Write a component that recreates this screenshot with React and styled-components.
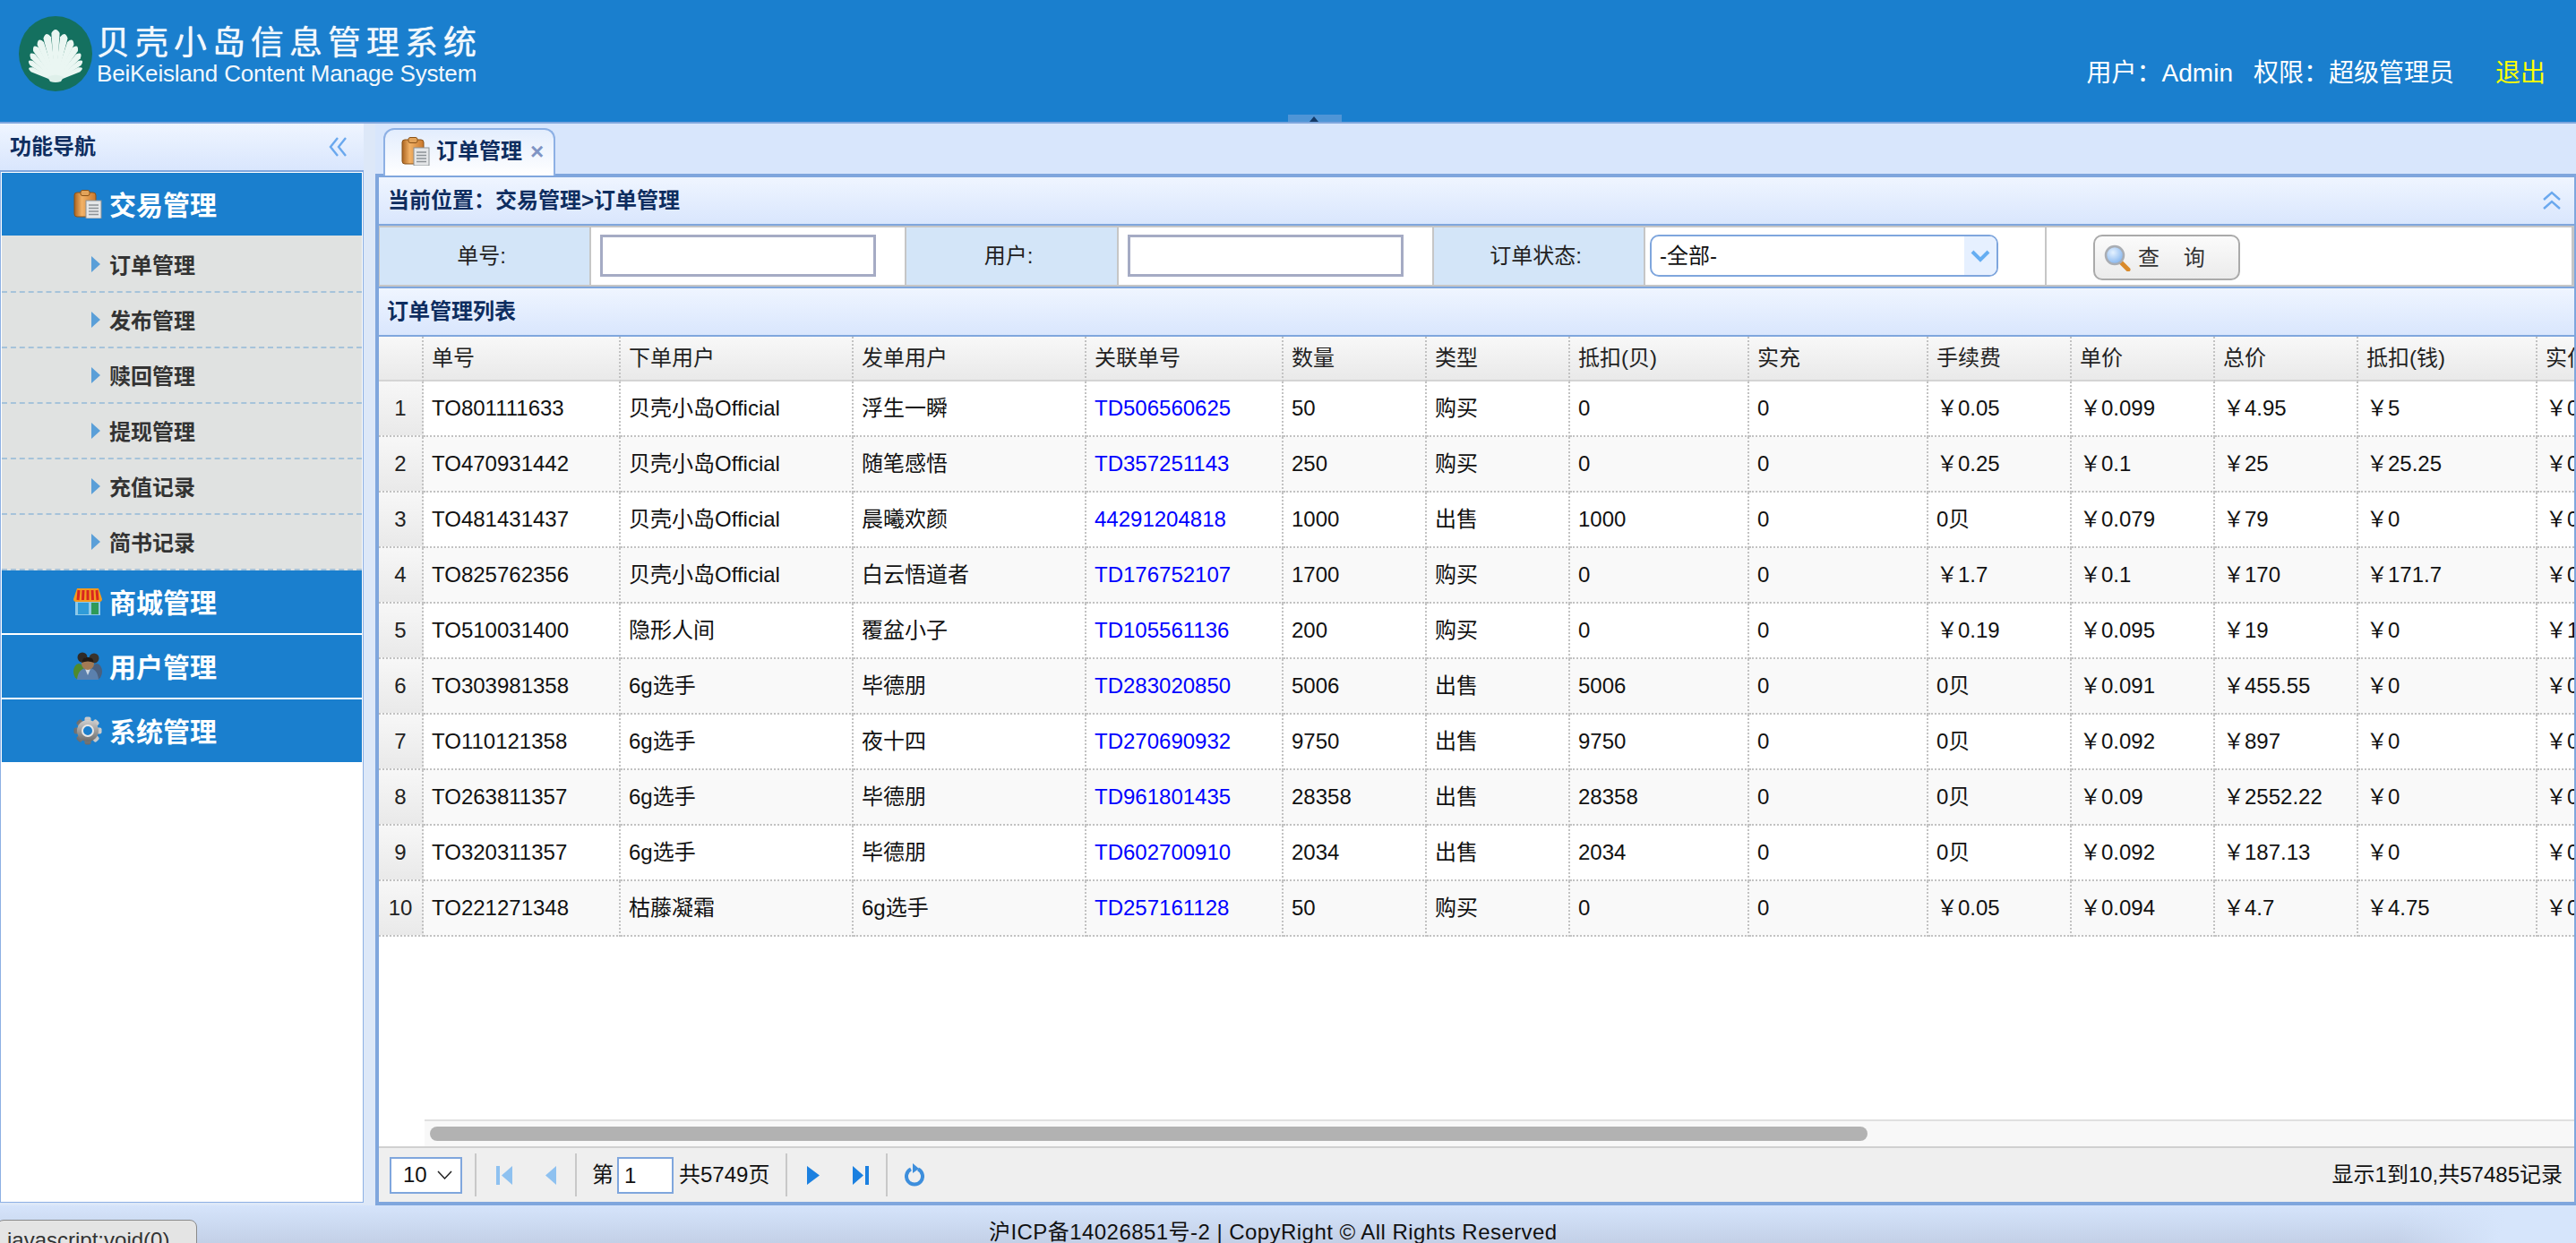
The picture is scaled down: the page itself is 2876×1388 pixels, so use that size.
import React from 'react';
import styled, { createGlobalStyle } from 'styled-components';

const FONT = '"Liberation Sans", "Noto Sans CJK SC", sans-serif';
const COL_WIDTHS = [50, 220, 260, 260, 220, 160, 160, 200, 200, 160, 160, 160, 200, 200];
const HEADS = ['', '单号', '下单用户', '发单用户', '关联单号', '数量', '类型', '抵扣(贝)', '实充', '手续费', '单价', '总价', '抵扣(钱)', '实付'];
const ROWS = [
  ['TO801111633', '贝壳小岛Official', '浮生一瞬', 'TD506560625', '50', '购买', '0', '0', '￥0.05', '￥0.099', '￥4.95', '￥5', '￥0'],
  ['TO470931442', '贝壳小岛Official', '随笔感悟', 'TD357251143', '250', '购买', '0', '0', '￥0.25', '￥0.1', '￥25', '￥25.25', '￥0'],
  ['TO481431437', '贝壳小岛Official', '晨曦欢颜', '44291204818', '1000', '出售', '1000', '0', '0贝', '￥0.079', '￥79', '￥0', '￥0'],
  ['TO825762356', '贝壳小岛Official', '白云悟道者', 'TD176752107', '1700', '购买', '0', '0', '￥1.7', '￥0.1', '￥170', '￥171.7', '￥0'],
  ['TO510031400', '隐形人间', '覆盆小子', 'TD105561136', '200', '购买', '0', '0', '￥0.19', '￥0.095', '￥19', '￥0', '￥1'],
  ['TO303981358', '6g选手', '毕德朋', 'TD283020850', '5006', '出售', '5006', '0', '0贝', '￥0.091', '￥455.55', '￥0', '￥0'],
  ['TO110121358', '6g选手', '夜十四', 'TD270690932', '9750', '出售', '9750', '0', '0贝', '￥0.092', '￥897', '￥0', '￥0'],
  ['TO263811357', '6g选手', '毕德朋', 'TD961801435', '28358', '出售', '28358', '0', '0贝', '￥0.09', '￥2552.22', '￥0', '￥0'],
  ['TO320311357', '6g选手', '毕德朋', 'TD602700910', '2034', '出售', '2034', '0', '0贝', '￥0.092', '￥187.13', '￥0', '￥0'],
  ['TO221271348', '枯藤凝霜', '6g选手', 'TD257161128', '50', '购买', '0', '0', '￥0.05', '￥0.094', '￥4.7', '￥4.75', '￥0'],
];
const SUB_MENU = ['订单管理', '发布管理', '赎回管理', '提现管理', '充值记录', '简书记录'];

const GlobalStyle = createGlobalStyle`
  html, body {
    margin: 0;
    padding: 0;
  }
  body {
    font-family: ${FONT};
    font-size: 24px;
    line-height: 30px;
    color: #111;
  }
  * {
    box-sizing: border-box;
  }
`;

const ShellLogo = () => {
  const ribs = [-65, -54, -43, -32, -22, -11, 0, 11, 22, 32, 43, 54, 65];
  return (
    <svg width="82" height="84" viewBox="0 0 82 84">
      <ellipse cx="41" cy="42" rx="41" ry="42" fill="#14705f" />
      {ribs.map((a) => {
        const len = 58 - Math.abs(a) * 0.37;
        const w = len * 0.08;
        return (
          <path
            key={a}
            transform={`rotate(${a} 41 72)`}
            d={`M40 72 L${41 - w} ${72 - len + 5} Q41 ${72 - len - 3} ${41 + w} ${72 - len + 5} L42 72 Z`}
            fill="#eaf6f2"
          />
        );
      })}
      <path d="M32 68 Q41 63 50 68 L47 73 Q41 75 35 73 Z" fill="#dff0ea" />
    </svg>
  );
};

const ClipboardIcon = ({ id }) => (
  <svg width="32" height="32" viewBox="0 0 32 32">
    <defs>
      <linearGradient id={id} x1="0" y1="0" x2="1" y2="0">
        <stop offset="0" stopColor="#a9631f" />
        <stop offset="0.35" stopColor="#f2b267" />
        <stop offset="1" stopColor="#c9782c" />
      </linearGradient>
    </defs>
    <rect x="1" y="3" width="24" height="27" rx="3" fill={`url(#${id})`} stroke="#8a5218" />
    <rect x="8" y="0.5" width="10" height="6" rx="2" fill="#e2a35a" stroke="#8a5218" />
    <rect x="14" y="12" width="17" height="20" fill="#e4e6e8" stroke="#8c9296" />
    <path d="M17 17H28M17 20.5H28M17 24H28M17 27.500H28" stroke="#8c9296" strokeWidth="1.6" />
  </svg>
);

const StoreIcon = () => (
  <svg width="32" height="32" viewBox="0 0 32 32">
    <rect x="2" y="13" width="28" height="18" fill="#8fc9e8" />
    <rect x="5" y="17" width="12" height="13" fill="#2f9bd8" />
    <rect x="20" y="17" width="8" height="13" fill="#2e9a58" />
    <path d="M4 1H28L32 13Q32 16 29 16H3Q0 16 0 13Z" fill="#f29a1f" />
    <path d="M6 3L5 14M11 3L10.500 14M16 3V14M21 3L21.500 14M26 3L27 14" stroke="#d8261f" strokeWidth="3" />
  </svg>
);

const UsersIcon = () => (
  <svg width="32" height="32" viewBox="0 0 32 32">
    <circle cx="10" cy="6" r="5.500" fill="#2f2a26" />
    <circle cx="23" cy="7" r="5.500" fill="#3a332c" />
    <ellipse cx="6" cy="22" rx="6" ry="9" fill="#4f8a2c" />
    <ellipse cx="26" cy="22" rx="6" ry="9" fill="#4a5f7d" />
    <path d="M4 31Q5 18 16 18Q27 18 28 31Z" fill="#5b80ad" />
    <path d="M13 19L16 26L19 19Z" fill="#cfd9e4" />
    <circle cx="16" cy="13" r="7" fill="#a37a54" />
    <path d="M9 12Q10 5 16 6Q22 5 23 12Q16 9 9 12Z" fill="#1f1a16" />
  </svg>
);

const GearIcon = ({ id }) => (
  <svg width="32" height="32" viewBox="0 0 32 32">
    <defs>
      <linearGradient id={id} x1="0" y1="0" x2="0" y2="1">
        <stop offset="0" stopColor="#cfcfcf" />
        <stop offset="1" stopColor="#6b6b6b" />
      </linearGradient>
    </defs>
    <g fill={`url(#${id})`}>
      {[0, 45, 90, 135].map((a) => (
        <rect key={a} x="12.500" y="0.500" width="7" height="31" rx="2" transform={`rotate(${a} 16 16)`} />
      ))}
      <circle cx="16" cy="16" r="12" />
    </g>
    <circle cx="16" cy="16" r="6" fill="#1a7fce" stroke="#e8e8e8" strokeWidth="2" />
  </svg>
);

const DoubleChevron = ({ up }) => (
  <svg width="22" height="22" viewBox="0 0 22 22" fill="none" stroke="#6aa8ee" strokeWidth="2.400">
    {up ? (
      <path d="M2 10L11 2L20 10M2 20L11 12L20 20" />
    ) : (
      <path d="M11 1L3 11L11 21M20 1L12 11L20 21" />
    )}
  </svg>
);

const SearchIcon = () => (
  <svg width="30" height="30" viewBox="0 0 30 30">
    <defs>
      <radialGradient id="glass" cx="0.4" cy="0.35" r="0.7">
        <stop offset="0" stopColor="#e4f1ff" />
        <stop offset="1" stopColor="#7fb2ee" />
      </radialGradient>
    </defs>
    <path d="M19 20L27 28" stroke="#d98a2b" strokeWidth="5" strokeLinecap="round" />
    <circle cx="12" cy="12" r="10" fill="url(#glass)" stroke="#a9adb3" strokeWidth="2.500" />
  </svg>
);

const PageIcon = ({ kind, on }) => {
  const shapes = {
    first: <path d="M0 0H4V21H0ZM18 0V21L6 10.500Z" />,
    prev: <path d="M18 0V21L6 10.500Z" />,
    next: <path d="M0 0V21L14 10.500Z" />,
    last: <path d="M0 0L12 10.500L0 21ZM14 0H18V21H14Z" />,
  };
  return (
    <svg width="18" height="21" viewBox="0 0 18 21" fill={on ? '#1b80e0' : '#8ec1f0'}>
      {shapes[kind]}
    </svg>
  );
};

const RefreshIcon = () => (
  <svg width="22" height="26" viewBox="0 0 22 26" fill="none">
    <path d="M7 6.500A9 9 0 1 0 15 6.500" stroke="#3d8edc" strokeWidth="4" />
    <path d="M9 0L16 6L9 11Z" fill="#3d8edc" />
  </svg>
);

const App = () => {
  return (
    <Page>
      <GlobalStyle />
      <Header>
        <ShellLogo />
        <LogoText>
          <LogoTitle>贝壳小岛信息管理系统</LogoTitle>
          <LogoSub>BeiKeisland Content Manage System</LogoSub>
        </LogoText>
        <UserBar>
          <span>用户：Admin</span>
          <UserRole>权限：超级管理员</UserRole>
          <Logout>退出</Logout>
        </UserBar>
        <CollapseHandle />
      </Header>

      <Body>
        <Side>
          <SideTitle>
            功能导航
            <DoubleChevron />
          </SideTitle>
          <SideNav>
            <NavHead>
              <ClipboardIcon id="clipNav" />
              <NavLabel>交易管理</NavLabel>
            </NavHead>
            <SubMenu>
              {SUB_MENU.map((item) => (
                <SubItem key={item}>
                  <SubArrow />
                  <NavLabel>{item}</NavLabel>
                </SubItem>
              ))}
            </SubMenu>
            <NavHead>
              <StoreIcon />
              <NavLabel>商城管理</NavLabel>
            </NavHead>
            <NavGap />
            <NavHead>
              <UsersIcon />
              <NavLabel>用户管理</NavLabel>
            </NavHead>
            <NavGap />
            <NavHead>
              <GearIcon id="gearNav" />
              <NavLabel>系统管理</NavLabel>
            </NavHead>
          </SideNav>
        </Side>

        <Splitter />

        <Main>
          <TabStrip>
            <Tab>
              <ClipboardIcon id="clipTab" />
              <TabLabel>订单管理</TabLabel>
              <TabClose>×</TabClose>
            </Tab>
          </TabStrip>

          <Panel>
            <PanelHead>
              当前位置：交易管理&gt;订单管理
              <DoubleChevron up />
            </PanelHead>

            <SearchRow>
              <SearchLabel $w={236}>单号:&nbsp;</SearchLabel>
              <SearchCell $w={352}>
                <SearchInput />
              </SearchCell>
              <SearchLabel $w={237}>用户:&nbsp;</SearchLabel>
              <SearchCell $w={352}>
                <SearchInput />
              </SearchCell>
              <SearchLabel $w={236}>订单状态:&nbsp;</SearchLabel>
              <SearchCell $w={448}>
                <StatusSelect>
                  -全部-
                  <SelectArrow>
                    <svg width="22" height="14" viewBox="0 0 22 14" fill="none" stroke="#66aef2" strokeWidth="4">
                      <path d="M2 2L11 11L20 2" />
                    </svg>
                  </SelectArrow>
                </StatusSelect>
              </SearchCell>
              <ButtonCell>
                <QueryButton>
                  <SearchIcon />
                  查&nbsp;&nbsp;&nbsp;&nbsp;询
                </QueryButton>
              </ButtonCell>
            </SearchRow>

            <ListTitle>订单管理列表</ListTitle>

            <GridArea>
              <Grid>
                <colgroup>
                  {COL_WIDTHS.map((w, i) => (
                    <col key={i} width={w} />
                  ))}
                </colgroup>
                <thead>
                  <tr>
                    {HEADS.map((h, i) => (
                      <HeadCell key={i}>{h}</HeadCell>
                    ))}
                  </tr>
                </thead>
                <tbody>
                  {ROWS.map((row, r) => (
                    <tr key={row[0]}>
                      <NumCell>{r + 1}</NumCell>
                      {row.map((v, c) => (
                        <DataCell key={c} $odd={r % 2 === 1} $link={c === 3}>
                          {v}
                        </DataCell>
                      ))}
                    </tr>
                  ))}
                </tbody>
              </Grid>
            </GridArea>

            <ScrollRow>
              <ScrollTrack>
                <ScrollThumb />
              </ScrollTrack>
            </ScrollRow>

            <Pager>
              <SizeSelect>
                10
                <svg width="17" height="10" viewBox="0 0 17 10" fill="none" stroke="#222" strokeWidth="1.500">
                  <path d="M1 1L8.500 9L16 1" />
                </svg>
              </SizeSelect>
              <PagerSep />
              <PagerBtn $w={40}>
                <PageIcon kind="first" />
              </PagerBtn>
              <PagerBtn $w={56} $pr={7}>
                <PageIcon kind="prev" />
              </PagerBtn>
              <PagerSep />
              <PagerText>第</PagerText>
              <PageInput>1</PageInput>
              <PagerTotal>共5749页</PagerTotal>
              <PagerSep />
              <PagerBtn $w={40}>
                <PageIcon kind="next" on />
              </PagerBtn>
              <PagerBtn $w={56} $pr={5}>
                <PageIcon kind="last" on />
              </PagerBtn>
              <PagerSep />
              <PagerBtn $w={41}>
                <RefreshIcon />
              </PagerBtn>
              <PagerInfo>显示1到10,共57485记录</PagerInfo>
            </Pager>
          </Panel>
        </Main>
      </Body>

      <Footer>
        沪ICP备14026851号-2 | CopyRight © All Rights Reserved
        <FooterDots>...</FooterDots>
        <StatusTip>javascript:void(0)</StatusTip>
      </Footer>
    </Page>
  );
};

export default App;

const Page = styled.div`
  width: 2876px;
  height: 1388px;
  display: flex;
  flex-direction: column;
  overflow: hidden;
  background: #dde8f8;
`;

const Header = styled.header`
  position: relative;
  height: 138px;
  flex: none;
  display: flex;
  align-items: flex-start;
  padding: 18px 34px 0 21px;
  background: #1a7fce;
  border-bottom: 2px solid #7fa6dd;
`;

const LogoText = styled.div`
  margin-left: 5px;
  color: #f2f8fc;
`;

const LogoTitle = styled.div`
  margin-top: 10px;
  font-size: 37px;
  line-height: 42px;
  letter-spacing: 6px;
  text-shadow: 0 0 1px #fff;
`;

const LogoSub = styled.div`
  font-size: 26px;
  line-height: 24px;
  letter-spacing: -0.200px;
`;

const UserBar = styled.div`
  margin-left: auto;
  margin-top: 46px;
  font-size: 28px;
  line-height: 36px;
  color: #fff;
`;

const UserRole = styled.span`
  margin-left: 23px;
`;

const Logout = styled.span`
  margin-left: 46px;
  color: #ffff00;
`;

const CollapseHandle = styled.div`
  position: absolute;
  left: 1438px;
  bottom: 0;
  width: 60px;
  height: 8px;
  background: #4f95d6;
  &::after {
    content: '';
    position: absolute;
    left: 24px;
    top: 2px;
    border: 5px solid transparent;
    border-top: 0;
    border-bottom: 6px solid #123a68;
  }
`;

const Body = styled.div`
  flex: none;
  height: 1208px;
  display: flex;
`;

const Side = styled.aside`
  width: 406px;
  flex: none;
  height: 1205px;
  display: flex;
  flex-direction: column;
`;

const SideTitle = styled.div`
  height: 54px;
  flex: none;
  display: flex;
  align-items: center;
  justify-content: space-between;
  padding: 0 18px 1px 11px;
  font-size: 24px;
  font-weight: 700;
  color: #0e2d5f;
  background: linear-gradient(#eff5ff, #d9e6fd);
  border-bottom: 2px solid #7fa6dd;
`;

const SideNav = styled.nav`
  flex: 1;
  padding: 1px;
  background: #fff;
  border: 1px solid #8db0e4;
  border-top: 0;
  display: flex;
  flex-direction: column;
`;

const NavHead = styled.div`
  height: 70px;
  flex: none;
  display: flex;
  align-items: center;
  gap: 8px;
  padding-left: 80px;
  font-size: 30px;
  font-weight: 700;
  color: #fff;
  background: #1a7fce;
`;

const NavLabel = styled.span`
  padding-top: 3px;
`;

const NavGap = styled.div`
  height: 2px;
  flex: none;
`;

const SubMenu = styled.div`
  padding-top: 2px;
  background: #e0e2e1;
`;

const SubItem = styled.div`
  height: 62px;
  display: flex;
  align-items: center;
  padding-left: 100px;
  font-size: 24px;
  font-weight: 700;
  color: #333;
  border-bottom: 2px dashed #a6c3da;
`;

const SubArrow = styled.span`
  width: 0;
  height: 0;
  margin-right: 10px;
  border-left: 10px solid #5a9fd8;
  border-top: 9px solid transparent;
  border-bottom: 9px solid transparent;
`;

const Splitter = styled.div`
  width: 13px;
  flex: none;
  background: #dde8f8;
`;

const Main = styled.main`
  flex: 1;
  min-width: 0;
  display: flex;
  flex-direction: column;
  background: #d8e6fc;
`;

const TabStrip = styled.div`
  height: 56px;
  flex: none;
  display: flex;
  align-items: flex-end;
  padding-left: 9px;
  position: relative;
  z-index: 1;
`;

const Tab = styled.div`
  width: 192px;
  height: 53px;
  margin-bottom: -2px;
  display: flex;
  align-items: center;
  padding: 0 0 4px 18px;
  background: linear-gradient(#e3edfd, #fff);
  border: 2px solid #8db0e4;
  border-bottom: 0;
  border-radius: 12px 12px 0 0;
`;

const TabLabel = styled.span`
  margin-left: 7px;
  font-size: 24px;
  font-weight: 700;
  color: #0e2d5f;
`;

const TabClose = styled.span`
  margin-left: 9px;
  font-size: 26px;
  font-weight: 700;
  color: #7f94c4;
`;

const Panel = styled.section`
  flex: 1;
  min-height: 0;
  display: flex;
  flex-direction: column;
  background: #fff;
  border: solid #7fa6dd;
  border-width: 4px 2px 4px 4px;
`;

const PanelHead = styled.div`
  height: 54px;
  flex: none;
  display: flex;
  align-items: center;
  justify-content: space-between;
  padding: 0 14px 0 10px;
  font-size: 24px;
  font-weight: 700;
  color: #0e2d5f;
  background: linear-gradient(#eff5ff, #d9e6fd);
  border-bottom: 2px solid #7fa6dd;
`;

const SearchRow = styled.div`
  height: 68px;
  flex: none;
  display: flex;
  border-top: 2px solid #c6c6c6;
  border-bottom: 2px solid #c6c6c6;
  border-left: 1px solid #c6c6c6;
  border-right: 3px solid #c6c6c6;
`;

const SearchLabel = styled.div`
  width: ${({ $w }) => $w}px;
  flex: none;
  display: flex;
  align-items: center;
  justify-content: center;
  font-size: 24px;
  color: #222;
  background: #d3e5f8;
  border-right: 2px solid #c6c6c6;
`;

const SearchCell = styled.div`
  width: ${({ $w }) => $w}px;
  flex: none;
  padding: 8px 0 0 10px;
  background: #fff;
  border-right: 2px solid #c6c6c6;
`;

const ButtonCell = styled.div`
  flex: 1;
  padding: 8px 0 0 52px;
`;

const SearchInput = styled.input`
  display: block;
  width: 308px;
  height: 47px;
  background: #fff;
  border: 3px solid #a5abc4;
  outline: none;
  border-radius: 0;
`;

const StatusSelect = styled.div`
  width: 389px;
  height: 47px;
  margin-left: -5px;
  display: flex;
  align-items: center;
  justify-content: space-between;
  padding-left: 9px;
  font-size: 24px;
  color: #111;
  border: 2px solid #7fa6dd;
  border-radius: 10px;
  overflow: hidden;
`;

const SelectArrow = styled.div`
  width: 36px;
  height: 100%;
  display: flex;
  align-items: center;
  justify-content: center;
  background: #e6f0ff;
`;

const QueryButton = styled.button`
  width: 164px;
  height: 51px;
  display: flex;
  align-items: center;
  gap: 8px;
  padding: 0 0 0 10px;
  font-family: ${FONT};
  font-size: 24px;
  line-height: 30px;
  color: #333;
  white-space: nowrap;
  background: linear-gradient(#fbfbfb, #ebebeb);
  border: 2px solid #aaaaaa;
  border-radius: 10px;
`;

const ListTitle = styled.div`
  height: 56px;
  flex: none;
  display: flex;
  align-items: center;
  padding-left: 9px;
  font-size: 24px;
  font-weight: 700;
  color: #0e2d5f;
  background: linear-gradient(#eff5ff, #d9e6fd);
  border-top: 2px solid #7fa6dd;
  border-bottom: 2px solid #7fa6dd;
`;

const GridArea = styled.div`
  flex: 1;
  min-height: 0;
  overflow: hidden;
`;

const Grid = styled.table`
  width: 2610px;
  table-layout: fixed;
  border-collapse: separate;
  border-spacing: 0;
`;

const HeadCell = styled.th`
  height: 50px;
  padding: 0 0 0 9px;
  font-size: 24px;
  font-weight: 400;
  text-align: left;
  color: #222;
  white-space: nowrap;
  background: linear-gradient(#f8f8f8, #e9e9e9);
  border-right: 2px dotted #c2c2c2;
  border-bottom: 2px solid #d4d4d4;
`;

const NumCell = styled.td`
  height: 62px;
  padding: 0;
  font-size: 24px;
  text-align: center;
  color: #222;
  background: linear-gradient(#f7f7f7, #e9e9e9);
  border-right: 2px dotted #c2c2c2;
  border-bottom: 2px dotted #c2c2c2;
`;

const DataCell = styled.td`
  height: 62px;
  padding: 0 0 0 9px;
  font-size: 24px;
  white-space: nowrap;
  overflow: hidden;
  color: ${({ $link }) => ($link ? '#0000ff' : '#111')};
  background: ${({ $odd }) => ($odd ? '#f9f9f9' : '#fff')};
  border-right: 2px dotted #c2c2c2;
  border-bottom: 2px dotted #c2c2c2;
`;

const ScrollRow = styled.div`
  height: 32px;
  flex: none;
  padding-left: 51px;
  border-bottom: 2px solid #d0d0d0;
`;

const ScrollTrack = styled.div`
  height: 100%;
  padding: 6px 0 0 6px;
  background: #f8f8f8;
  border-top: 2px solid #e0e0e0;
`;

const ScrollThumb = styled.div`
  width: 1605px;
  height: 16px;
  background: #b2b2b2;
  border-radius: 8px;
`;

const Pager = styled.div`
  height: 60px;
  flex: none;
  display: flex;
  align-items: center;
  padding: 0 13px 0 12px;
  font-size: 24px;
  color: #111;
  background: #efefef;
`;

const SizeSelect = styled.div`
  width: 81px;
  height: 41px;
  display: flex;
  align-items: center;
  justify-content: space-between;
  padding: 0 9px 0 13px;
  background: #fff;
  border: 2px solid #7fa6dd;
`;

const PagerSep = styled.div`
  width: 2px;
  height: 48px;
  flex: none;
  margin-left: 14px;
  background: #c8c8c8;
`;

const PagerBtn = styled.div`
  width: ${({ $w }) => $w}px;
  flex: none;
  display: flex;
  justify-content: flex-end;
  padding-right: ${({ $pr }) => $pr || 0}px;
`;

const PagerText = styled.span`
  margin-left: 17px;
`;

const PagerTotal = styled.span`
  margin: 0 4px 0 6px;
`;

const PageInput = styled.div`
  width: 63px;
  height: 41px;
  margin-left: 4px;
  padding-left: 6px;
  line-height: 37px;
  background: #fff;
  border: 2px solid #7fa6dd;
`;

const PagerInfo = styled.div`
  margin-left: auto;
`;

const Footer = styled.footer`
  position: relative;
  flex: 1;
  overflow: hidden;
  padding-top: 13px;
  text-align: center;
  font-size: 24px;
  line-height: 34px;
  letter-spacing: 0.450px;
  white-space: pre;
  color: #111;
  background:
    linear-gradient(105deg, transparent 93%, #d6e5fb 97%),
    linear-gradient(#d5e4fb, #c3d0e7);
`;

const FooterDots = styled.span`
  margin-left: 12px;
  color: #c4d4ec;
`;

const StatusTip = styled.div`
  position: absolute;
  left: -4px;
  top: 16px;
  width: 224px;
  height: 50px;
  padding: 5px 0 0 11px;
  text-align: left;
  letter-spacing: 0;
  color: #333;
  background: #e4e4e4;
  border: 1px solid #8a8a8a;
  border-radius: 8px;
`;
